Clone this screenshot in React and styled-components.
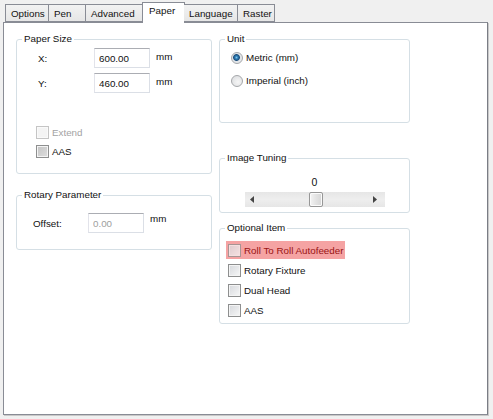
import React from "react";
import styled, { createGlobalStyle } from "styled-components";

const GlobalStyle = createGlobalStyle`
  html, body {
    margin: 0;
    padding: 0;
    background: #f0f0f0;
  }
  body {
    font-family: "Liberation Sans", Arial, sans-serif;
    font-size: 9.8px;
    color: #111;
  }
`;

const Window = styled.div`
  width: 493px;
  height: 419px;
  box-sizing: border-box;
  padding: 2px 5px 0 3px;
`;

const TabStrip = styled.div`
  display: flex;
  align-items: flex-end;
  height: 20px;
  padding-left: 2px;
  position: relative;
  z-index: 1;
`;

const Tab = styled.div`
  box-sizing: border-box;
  width: ${(p) => p.$w}px;
  height: ${(p) => (p.$active ? 21 : 18)}px;
  margin: 0 ${(p) => (p.$active ? -1 : 0)}px;
  margin-bottom: ${(p) => (p.$active ? -1 : 0)}px;
  padding: ${(p) => (p.$active ? "2px 0 0 6px" : "3px 0 0 5px")};
  border: 1px solid #898c95;
  border-left-width: ${(p) => (p.$first || p.$active ? 1 : 0)}px;
  border-bottom: ${(p) => (p.$active ? "none" : "1px solid #898c95")};
  background: ${(p) =>
    p.$active ? "#fff" : "linear-gradient(#f2f2f2, #e6e6e6)"};
  line-height: 12px;
  white-space: nowrap;
`;

const Panel = styled.div`
  box-sizing: border-box;
  height: 393px;
  border: 1px solid #898c95;
  border-right-color: #7a7d85;
  box-shadow: 1px 1px 0 #c9c9c9;
  background: #fff;
  padding: 10px 0 0 12px;
  display: flex;
  gap: 7px;
`;

const Column = styled.div`
  display: flex;
  flex-direction: column;
  width: ${(p) => p.$w}px;
`;

const Group = styled.fieldset`
  box-sizing: border-box;
  margin: ${(p) => p.$mt || 0}px 0 0;
  padding: 0;
  height: ${(p) => p.$h}px;
  border: 1px solid #d5dfe5;
  border-radius: 3px;
  min-width: 0;
`;

const Legend = styled.legend`
  margin-left: 5px;
  padding: 0 2px;
  font-size: 9.8px;
  line-height: 12px;
`;

const Body = styled.div`
  display: flex;
  flex-direction: column;
  align-items: ${(p) => p.$align || "flex-start"};
  padding: ${(p) => p.$pad};
  gap: ${(p) => p.$gap || 0}px;
`;

const FieldRow = styled.div`
  display: flex;
  align-items: center;
  height: 20px;
`;

const Label = styled.span`
  width: ${(p) => p.$w}px;
  padding-left: ${(p) => p.$pl || 0}px;
`;

const TextBox = styled.input`
  box-sizing: border-box;
  width: 56px;
  height: 20px;
  margin: 0;
  padding: 0 0 0 4px;
  border: 1px solid #dbdfe6;
  border-top-color: #abadb3;
  border-left-color: #e2e3ea;
  font-family: "Liberation Sans", Arial, sans-serif;
  font-size: 9.8px;
  color: ${(p) => (p.disabled ? "#a0a0a0" : "#111")};
  background: #fff;
  outline: none;
`;

const Unit = styled.span`
  margin-left: 6px;
  margin-top: ${(p) => p.$up || 0}px;
  align-self: flex-start;
  line-height: 18px;
`;

const CheckRow = styled.div`
  display: flex;
  align-items: center;
  gap: 3px;
  height: ${(p) => p.$h || 15}px;
  padding: ${(p) => (p.$hl ? "0 2px" : 0)};
  margin-left: ${(p) => p.$ml || 0}px;
  margin-top: ${(p) => p.$mt || 0}px;
  background: ${(p) => (p.$hl ? "#f5a3a3" : "transparent")};
  color: ${(p) => (p.$dim ? "#a3a3a3" : p.$hl ? "#9a1414" : "#111")};
`;

const Box = styled.span`
  box-sizing: border-box;
  width: 13px;
  height: 13px;
  border: 1px solid ${(p) => (p.$dim ? "#c5c5c5" : "#8e8f8f")};
  background: ${(p) =>
    p.$dim
      ? "#f4f4f4"
      : p.$mixed
      ? "linear-gradient(135deg, #c4c4c4, #dedede)"
      : "linear-gradient(135deg, #d6d8dc, #f7f7f7)"};
  box-shadow: inset 0 0 0 1px ${(p) => (p.$dim ? "#fafafa" : "#f4f4f4")};
  opacity: ${(p) => (p.$hl ? 0.75 : 1)};
`;

const Radio = styled.span`
  box-sizing: border-box;
  width: 12px;
  height: 12px;
  border-radius: 50%;
  border: 1px solid #a5a7aa;
  background: ${(p) =>
    p.$on
      ? "radial-gradient(circle at 45% 45%, #7cc7ee 0, #2a77b0 1.6px, #1d4f7c 3px, #dfe3e7 3.8px, #f2f2f2 100%)"
      : "radial-gradient(circle at 60% 60%, #f6f6f6, #d8dadd)"};
`;

const RadioRow = styled.div`
  display: flex;
  align-items: center;
  gap: 3px;
  height: 15px;
`;

const Value = styled.div`
  line-height: 12px;
  font-size: 10.5px;
`;

const ScrollTrack = styled.div`
  box-sizing: border-box;
  width: 140px;
  height: 15px;
  margin-top: 4px;
  display: flex;
  align-items: center;
  justify-content: space-between;
  padding: 0 8px 0 5px;
  background: linear-gradient(#e6e6e6, #eeeeee 50%, #e6e6e6);
  position: relative;
`;

const Thumb = styled.div`
  position: absolute;
  left: 64px;
  top: 0;
  box-sizing: border-box;
  width: 14px;
  height: 15px;
  border: 1px solid #979797;
  border-radius: 2px;
  background: linear-gradient(90deg, #f4f4f4, #e3e3e3 50%, #d6d6d6);
  box-shadow: inset 0 0 0 1px #fbfbfb;
`;

const Arrow = ({ dir }) => (
  <svg width="4" height="7" viewBox="0 0 4 7">
    {dir === "left" ? (
      <path d="M4 0 L0 3.5 L4 7 Z" fill="#444" />
    ) : (
      <path d="M0 0 L4 3.5 L0 7 Z" fill="#444" />
    )}
  </svg>
);

const tabs = [
  { name: "Options", w: 44 },
  { name: "Pen", w: 37 },
  { name: "Advanced", w: 57 },
  { name: "Paper", w: 43, active: true },
  { name: "Language", w: 54 },
  { name: "Raster", w: 37 },
];

const optional = [
  { name: "Roll To Roll Autofeeder", hl: true },
  { name: "Rotary Fixture" },
  { name: "Dual Head" },
  { name: "AAS" },
];

export default function App() {
  return (
    <>
      <GlobalStyle />
      <Window>
        <TabStrip>
          {tabs.map((t, i) => (
            <Tab key={t.name} $w={t.w} $active={t.active} $first={i === 0}>
              {t.name}
            </Tab>
          ))}
        </TabStrip>
        <Panel>
          <Column $w={196}>
            <Group $h={141}>
              <Legend>Paper Size</Legend>
              <Body $pad="3px 0 0 19px" $gap={5}>
                <FieldRow>
                  <Label $w={56} $pl={2}>X:</Label>
                  <TextBox readOnly value="600.00" />
                  <Unit>mm</Unit>
                </FieldRow>
                <FieldRow>
                  <Label $w={56} $pl={2}>Y:</Label>
                  <TextBox readOnly value="460.00" />
                  <Unit>mm</Unit>
                </FieldRow>
                <CheckRow $dim $mt={27}>
                  <Box $dim />
                  Extend
                </CheckRow>
                <CheckRow $mt={-1}>
                  <Box $mixed />
                  AAS
                </CheckRow>
              </Body>
            </Group>
            <Group $h={61} $mt={15}>
              <Legend>Rotary Parameter</Legend>
              <Body $pad="12px 0 0 16px">
                <FieldRow>
                  <Label $w={55}>Offset:</Label>
                  <TextBox readOnly disabled value="0.00" />
                  <Unit $up={-3}>mm</Unit>
                </FieldRow>
              </Body>
            </Group>
          </Column>
          <Column $w={191}>
            <Group $h={90}>
              <Legend>Unit</Legend>
              <Body $pad="5px 0 0 11px" $gap={8}>
                <RadioRow>
                  <Radio $on />
                  Metric (mm)
                </RadioRow>
                <RadioRow>
                  <Radio />
                  Imperial (inch)
                </RadioRow>
              </Body>
            </Group>
            <Group $h={61} $mt={29}>
              <Legend>Image Tuning</Legend>
              <Body $pad="12px 0 0 0" $align="center">
                <Value>0</Value>
                <ScrollTrack>
                  <Arrow dir="left" />
                  <Thumb />
                  <Arrow dir="right" />
                </ScrollTrack>
              </Body>
            </Group>
            <Group $h={102} $mt={9}>
              <Legend>Optional Item</Legend>
              <Body $pad="7px 0 0 6px" $gap={2}>
                {optional.map((o) => (
                  <CheckRow key={o.name} $h={18} $hl={o.hl} $ml={o.hl ? 0 : 2}>
                    <Box $hl={o.hl} />
                    {o.name}
                  </CheckRow>
                ))}
              </Body>
            </Group>
          </Column>
        </Panel>
      </Window>
    </>
  );
}
